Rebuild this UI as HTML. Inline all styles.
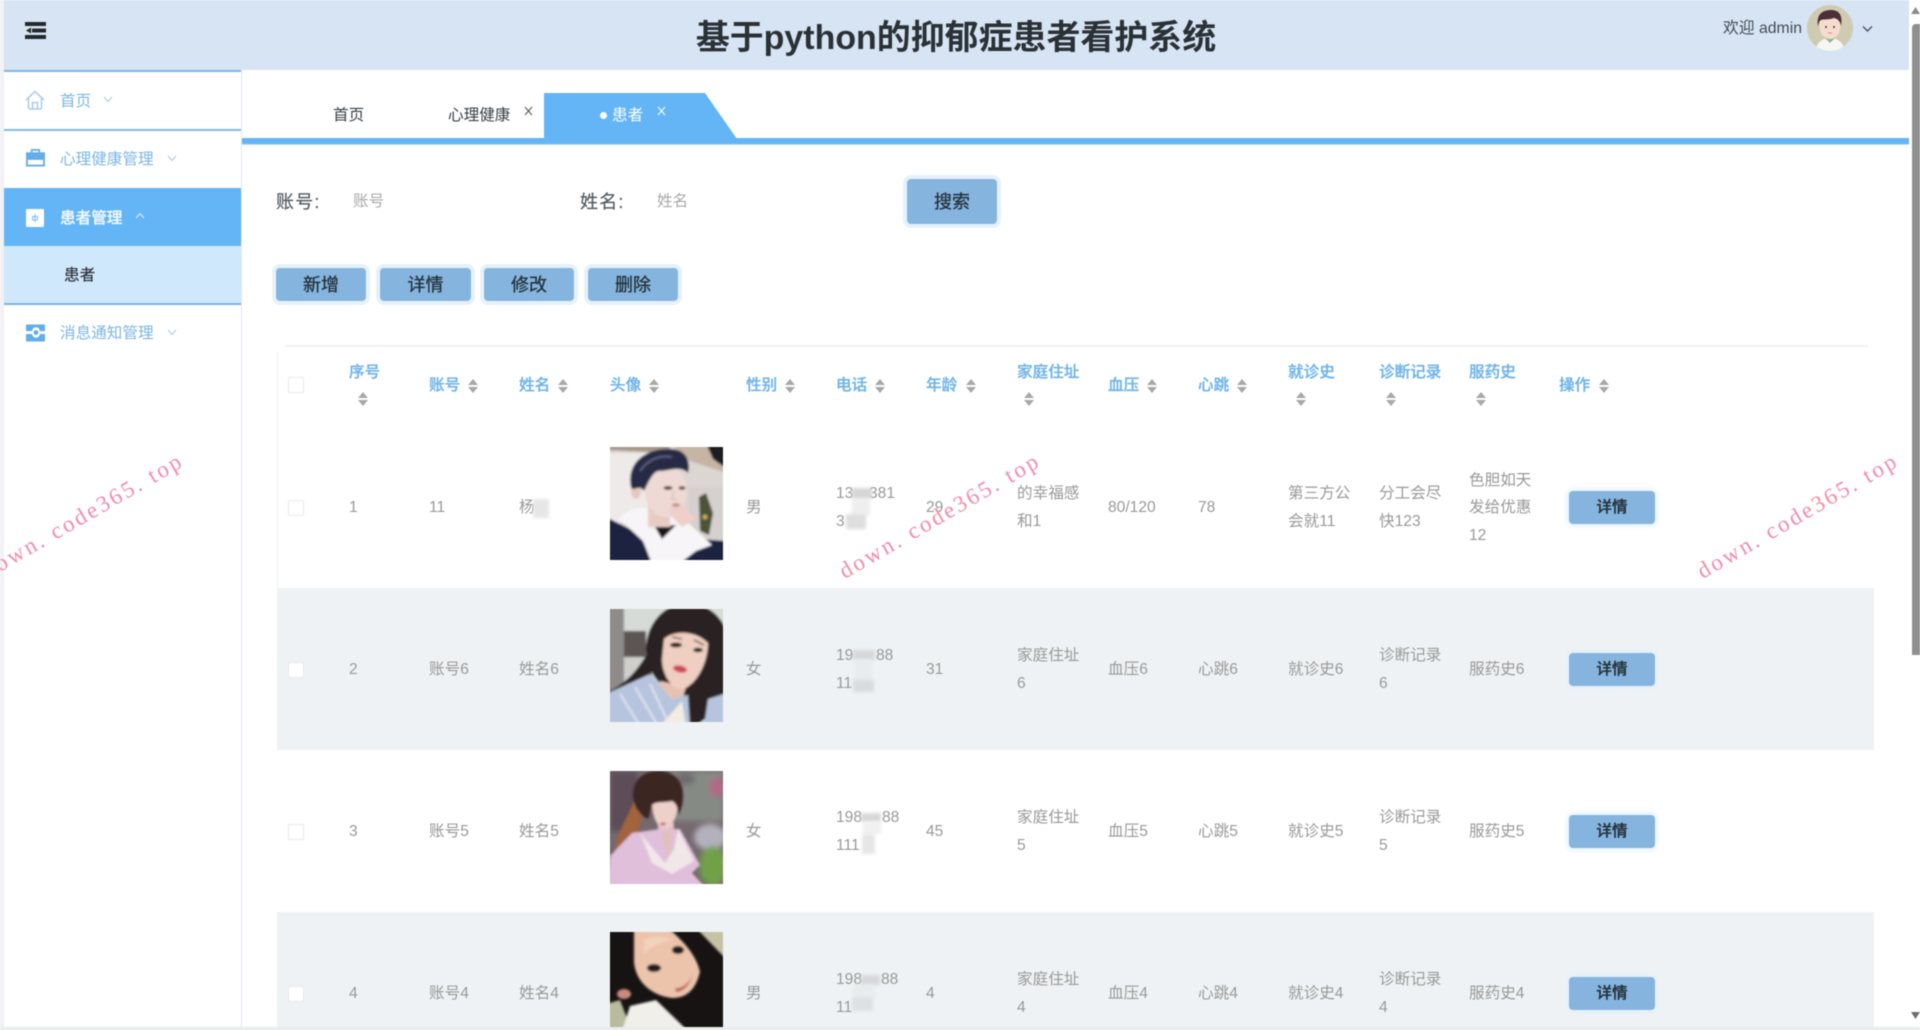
<!DOCTYPE html>
<html lang="zh-CN">
<head>
<meta charset="utf-8">
<title>基于python的抑郁症患者看护系统</title>
<style>
html,body{margin:0;padding:0;width:1920px;height:1030px;overflow:hidden;background:#fff;}
#root{position:relative;width:1920px;height:1030px;overflow:hidden;background:#fff;filter:blur(.45px);font-family:"Liberation Sans","Noto Sans CJK SC",sans-serif;}
.a{position:absolute;}
.t{position:absolute;line-height:20px;height:20px;margin-top:1px;white-space:nowrap;font-size:15.6px;color:#999;}
.h{color:#6fb4ea;font-weight:500;-webkit-text-stroke:.3px #6fb4ea;}
.m{color:#7db6e4;margin-left:-1px;}
.cr{position:absolute;width:10px;height:14px;}
.cr:before,.cr:after{content:"";position:absolute;left:0;border-left:5px solid transparent;border-right:5px solid transparent;}
.cr:before{top:0;border-bottom:6px solid #a8a8a8;}
.cr:after{bottom:0;border-top:6px solid #a8a8a8;}
.cb{position:absolute;left:288px;width:14px;height:14px;background:#fff;border:1px solid #e8e8e8;border-radius:2px;}
.btn{position:absolute;background:#85b5de;border-radius:4px;box-shadow:0 0 0 4px #e6f2fb;color:#25323c;text-align:center;font-size:18px;-webkit-text-stroke:.3px #25323c;}
.btn span{position:relative;top:1px;}
.dbtn{position:absolute;left:1569px;width:86px;height:33px;line-height:34px;background:#85b5de;border-radius:4px;box-shadow:0 0 6px 2px #e2f0fb;color:#25323c;text-align:center;font-size:15.6px;font-weight:500;-webkit-text-stroke:.3px #25323c;}
.lbl{color:#555c63;font-size:18px;letter-spacing:1.2px;-webkit-text-stroke:.2px #555c63;}
.wm{position:absolute;font-family:"Liberation Serif",serif;font-size:23px;letter-spacing:2.6px;color:#f28cab;white-space:nowrap;transform:translate(-50%,-50%) rotate(-30deg);line-height:26px;}
.ph{position:absolute;left:610px;width:113px;}
.bl{position:absolute;filter:blur(1.5px);}
</style>
</head>
<body>
<div id="root">
<svg width="0" height="0" style="position:absolute"><defs><filter id="b1" x="-10%" y="-10%" width="120%" height="120%"><feGaussianBlur stdDeviation="1.1"/></filter><filter id="b3" x="-10%" y="-10%" width="120%" height="120%"><feGaussianBlur stdDeviation="2.6"/></filter></defs></svg>

<!-- left strip -->
<div class="a" style="left:0;top:0;width:4px;height:1030px;background:#f1f2f5"></div>

<!-- header -->
<div class="a" style="left:4px;top:0;width:1905px;height:70px;background:#d7e4f4"></div>
<svg class="a" style="left:25px;top:22px" width="21" height="17" viewBox="0 0 21 17"><rect width="21" height="4" fill="#23282e"/><rect x="7" y="6.5" width="14" height="4" fill="#23282e"/><path d="M1 8.5 6 5.5V11.5Z" fill="#23282e"/><rect y="13" width="21" height="4" fill="#23282e"/></svg>
<div class="a" style="left:556px;width:800px;top:15px;text-align:center;font-size:33.95px;line-height:46px;font-weight:700;color:#2a3136;white-space:nowrap">基于python的抑郁症患者看护系统</div>
<div class="t" style="left:1723px;top:18px;color:#444c55;font-size:15.8px">欢迎 admin</div>
<svg class="a" style="left:1807px;top:5px" width="46" height="46" viewBox="0 0 46 46"><defs><clipPath id="av"><circle cx="23" cy="23" r="23"/></clipPath></defs><g clip-path="url(#av)"><rect width="46" height="46" fill="#cfcbb0"/><path d="M8 46C10 36 17 33 23 33S36 36 38 46Z" fill="#f6f6f2"/><path d="M18 33 23 38 28 33 26 30H20Z" fill="#8fb49a"/><ellipse cx="23" cy="21" rx="10.5" ry="13" fill="#f5dccd"/><path d="M11 21C9 9 16 5 24 5S36 10 34 21C33 16 31 14 27 13 22 15 16 14 14 15 12 16 12 18 11 21Z" fill="#4b3039"/><circle cx="19" cy="22" r="1" fill="#4b3039"/><circle cx="27" cy="22" r="1" fill="#4b3039"/><path d="M21 28H25" stroke="#d88" stroke-width="1"/></g></svg>
<svg class="a" style="left:1862px;top:25px" width="11" height="8" viewBox="0 0 11 8"><path d="M1 1.5 5.5 6 10 1.5" fill="none" stroke="#4a525a" stroke-width="1.4"/></svg>

<!-- scrollbar -->
<div class="a" style="left:1912px;top:24px;width:8px;height:631px;background:#8f8f8f;border-radius:4px 0 0 0"></div>
<svg class="a" style="left:1911px;top:7px" width="9" height="7"><path d="M0 7 4.5 0 9 7Z" fill="#8a8a8a"/></svg>
<svg class="a" style="left:1911px;top:1012px" width="9" height="7"><path d="M0 0 4.5 7 9 0Z" fill="#6e6e6e"/></svg>

<!-- sidebar -->
<div class="a" style="left:4px;top:70px;width:237px;height:960px;background:#fff;border-right:1px solid #e2e6ee"></div>
<div class="a" style="left:4px;top:70px;width:237px;height:2px;background:#7cb4e2"></div>
<div class="a" style="left:4px;top:129px;width:237px;height:2px;background:#86b8e0"></div>
<div class="a" style="left:4px;top:188px;width:237px;height:58px;background:#64b5f6"></div>
<div class="a" style="left:4px;top:246px;width:237px;height:57px;background:#cfe8fc"></div>
<div class="a" style="left:4px;top:303px;width:237px;height:2px;background:#7cb4e2"></div>

<svg class="a" style="left:25px;top:90px" width="20" height="20" viewBox="0 0 20 20"><path d="M1 10 10 1.5 19 10M3.5 8.5V17.5A1.5 1.5 0 0 0 5 19H15A1.5 1.5 0 0 0 16.5 17.5V8.5M7.5 19V12.5H12.5V19" fill="none" stroke="#9cc6e8" stroke-width="1.3"/></svg>
<div class="t m" style="left:61px;top:91px">首页</div>
<svg class="a" style="left:103px;top:96px" width="10" height="7"><path d="M1 1 5 5.5 9 1" fill="none" stroke="#a9cde9" stroke-width="1.1"/></svg>

<svg class="a" style="left:26px;top:148px" width="19" height="19" viewBox="0 0 20 19"><path d="M6 5V1.5H14V5" fill="none" stroke="#62aeea" stroke-width="1.8"/><rect y="4" width="20" height="8.5" fill="#62aeea"/><rect y="12.5" width="20" height="6.5" fill="#62aeea"/><rect x="2" y="12" width="16" height="5" fill="#fff"/></svg>
<div class="t m" style="left:61px;top:149px">心理健康管理</div>
<svg class="a" style="left:167px;top:155px" width="10" height="7"><path d="M1 1 5 5.5 9 1" fill="none" stroke="#a9cde9" stroke-width="1.1"/></svg>

<svg class="a" style="left:26px;top:209px" width="18" height="18" viewBox="0 0 18 18"><rect width="18" height="18" rx="1" fill="#fff"/><path d="M9 5V13" stroke="#7cc0f6" stroke-width="1"/><path d="M6.5 7.5H11.5V11H6.5Z" fill="none" stroke="#7cc0f6" stroke-width="1"/></svg>
<div class="t" style="left:60px;top:208px;color:#f2f9ff;font-weight:500;-webkit-text-stroke:.25px #f2f9ff">患者管理</div>
<svg class="a" style="left:135px;top:212px" width="10" height="7"><path d="M1 6 5 1.5 9 6" fill="none" stroke="#d6ecfd" stroke-width="1.1"/></svg>
<div class="t" style="left:64px;top:265px;color:#2d3339;-webkit-text-stroke:.2px #2d3339">患者</div>

<svg class="a" style="left:26px;top:324px" width="19" height="18" viewBox="0 0 20 18"><path d="M0 0H20V7H14.5A4 4 0 0 0 6.5 7H0Z" fill="#62aeea"/><path d="M0 10H6.5A4 4 0 0 0 14.5 10H20V18H0Z" fill="#62aeea"/><circle cx="10.5" cy="8.5" r="2.5" fill="#62aeea"/></svg>
<div class="t m" style="left:61px;top:323px">消息通知管理</div>
<svg class="a" style="left:167px;top:329px" width="10" height="7"><path d="M1 1 5 5.5 9 1" fill="none" stroke="#a9cde9" stroke-width="1.1"/></svg>

<!-- tabs -->
<svg class="a" style="left:544px;top:93px" width="193" height="46" viewBox="0 0 193 46"><path d="M0 0H161L193 46H0Z" fill="#64b5f6"/></svg>
<div class="a" style="left:242px;top:138px;width:1667px;height:6px;background:#64b5f6;box-shadow:0 1px 0 #b9e0fb"></div>
<div class="t" style="left:333px;top:105px;color:#3a3f45">首页</div>
<div class="t" style="left:448px;top:105px;color:#3a3f45">心理健康</div>
<svg class="a" style="left:524px;top:106px" width="9" height="10"><path d="M1 1 8 9M8 1 1 9" stroke="#555" stroke-width="1"/></svg>
<div class="a" style="left:600px;top:112px;width:7px;height:7px;border-radius:50%;background:#fff"></div>
<div class="t" style="left:612px;top:105px;color:#fff">患者</div>
<svg class="a" style="left:657px;top:106px" width="9" height="10"><path d="M1 1 8 9M8 1 1 9" stroke="#fff" stroke-width="1"/></svg>

<!-- search -->
<div class="t lbl" style="left:276px;top:191px">账号:</div>
<div class="t" style="left:353px;top:191px;color:#aaa">账号</div>
<div class="t lbl" style="left:580px;top:191px">姓名:</div>
<div class="t" style="left:657px;top:191px;color:#aaa">姓名</div>
<div class="btn" style="left:907px;top:179px;width:90px;height:45px;line-height:45px"><span>搜索</span></div>

<div class="btn" style="left:276px;top:268px;width:90px;height:33px;line-height:33px"><span>新增</span></div>
<div class="btn" style="left:380px;top:268px;width:91px;height:33px;line-height:33px"><span>详情</span></div>
<div class="btn" style="left:484px;top:268px;width:90px;height:33px;line-height:33px"><span>修改</span></div>
<div class="btn" style="left:588px;top:268px;width:90px;height:33px;line-height:33px"><span>删除</span></div>

<!-- table -->
<div class="a" style="left:285px;top:345px;width:1583px;height:2px;background:#f1f2f2"></div>
<div class="a" style="left:277px;top:352px;width:1px;height:236px;background:#f2f3f4"></div>
<div class="a" style="left:277px;top:588px;width:1597px;height:162px;background:#eff2f4"></div>
<div class="a" style="left:277px;top:912px;width:1597px;height:118px;background:#eff2f4"></div>

<div class="cb" style="top:377px"></div>
<div class="t h" style="left:349px;top:362px">序号</div><div class="cr" style="left:358px;top:392px"></div>
<div class="t h" style="left:429px;top:375px">账号</div><div class="cr" style="left:468px;top:379px"></div>
<div class="t h" style="left:519px;top:375px">姓名</div><div class="cr" style="left:558px;top:379px"></div>
<div class="t h" style="left:610px;top:375px">头像</div><div class="cr" style="left:649px;top:379px"></div>
<div class="t h" style="left:746px;top:375px">性别</div><div class="cr" style="left:785px;top:379px"></div>
<div class="t h" style="left:836px;top:375px">电话</div><div class="cr" style="left:875px;top:379px"></div>
<div class="t h" style="left:926px;top:375px">年龄</div><div class="cr" style="left:966px;top:379px"></div>
<div class="t h" style="left:1017px;top:362px">家庭住址</div><div class="cr" style="left:1024px;top:392px"></div>
<div class="t h" style="left:1108px;top:375px">血压</div><div class="cr" style="left:1147px;top:379px"></div>
<div class="t h" style="left:1198px;top:375px">心跳</div><div class="cr" style="left:1237px;top:379px"></div>
<div class="t h" style="left:1288px;top:362px">就诊史</div><div class="cr" style="left:1296px;top:392px"></div>
<div class="t h" style="left:1379px;top:362px">诊断记录</div><div class="cr" style="left:1386px;top:392px"></div>
<div class="t h" style="left:1469px;top:362px">服药史</div><div class="cr" style="left:1476px;top:392px"></div>
<div class="t h" style="left:1559px;top:375px">操作</div><div class="cr" style="left:1599px;top:379px"></div>

<!-- row 1 -->
<div class="cb" style="top:500px"></div>
<div class="t" style="left:349px;top:497px">1</div>
<div class="t" style="left:429px;top:497px">11</div>
<div class="t" style="left:519px;top:497px">杨</div>
<div class="bl" style="left:533px;top:499px;width:16px;height:19px;background:#e6e6e6"></div>
<svg class="ph" style="top:447px" width="113" height="113" viewBox="0 0 113 113"><g filter="url(#b1)"><rect x="-4" y="-4" width="121" height="121" fill="#dcd6d3"/><rect x="-4" y="6" width="46" height="70" fill="#efeaea"/><path d="M-4 -4H60V6L-4 3Z" fill="#a89888"/><path d="M60 -4H117V26L80 14Z" fill="#c6b4a4"/><path d="M96 -4H117V22L103 12Z" fill="#1c1c20"/><rect x="78" y="40" width="39" height="60" fill="#d6d0ce"/><path d="M89 50 96 46 103 66 99 88 90 84Z" fill="#4b5238"/><circle cx="95" cy="70" r="2.5" fill="#c9ad58"/><path d="M-4 70 28 86 46 117H-4Z" fill="#1a2340"/><path d="M66 100 88 92 117 94V117H66Z" fill="#1a2340"/><path d="M9 72C18 60 35 60 43 62L72 70 102 98 86 104 69 117H42L33 94Z" fill="#f7f5f7"/><path d="M45 80 66 78 52 92Z" fill="#191517"/><rect x="38" y="52" width="22" height="28" fill="#e8ccc4"/><ellipse cx="26" cy="44" rx="5" ry="8" fill="#e6c8c0"/><ellipse cx="56" cy="44" rx="21" ry="26" fill="#efd9d4"/><path d="M21 40C16 14 38 1 60 2 76 2 81 14 78 26 70 18 60 24 48 24 42 26 38 36 34 44 28 36 24 46 21 40Z" fill="#262a45"/><path d="M30 24C38 12 50 8 62 10" stroke="#5a6080" stroke-width="2" fill="none"/><ellipse cx="58" cy="41" rx="4.5" ry="1.8" fill="#3a2a2c"/><ellipse cx="72" cy="41" rx="3.5" ry="1.6" fill="#3a2a2c"/><path d="M64 44 62 52 67 53" stroke="#d8b0a8" fill="none"/><path d="M60 60 73 58 86 72 72 80 60 68Z" fill="#efcfca"/><ellipse cx="66" cy="58" rx="4" ry="1.8" fill="#c48c84"/></g></svg>
<div class="t" style="left:746px;top:497px">男</div>
<div class="t" style="left:836px;top:483px">13</div><div class="t" style="left:869px;top:483px">381</div>
<div class="t" style="left:836px;top:511px">3</div>
<div class="bl" style="left:852px;top:488px;width:20px;height:11px;background:#d6d6d6"></div>
<div class="bl" style="left:852px;top:499px;width:18px;height:16px;background:#eeeeee"></div>
<div class="bl" style="left:846px;top:514px;width:20px;height:15px;background:#dedede"></div>
<div class="t" style="left:926px;top:497px">29</div>
<div class="t" style="left:1017px;top:483px">的幸福感</div><div class="t" style="left:1017px;top:511px">和1</div>
<div class="t" style="left:1108px;top:497px">80/120</div>
<div class="t" style="left:1198px;top:497px">78</div>
<div class="t" style="left:1288px;top:483px">第三方公</div><div class="t" style="left:1288px;top:511px">会就11</div>
<div class="t" style="left:1379px;top:483px">分工会尽</div><div class="t" style="left:1379px;top:511px">快123</div>
<div class="t" style="left:1469px;top:470px">色胆如天</div><div class="t" style="left:1469px;top:497px">发给优惠</div><div class="t" style="left:1469px;top:525px">12</div>
<div class="dbtn" style="top:491px">详情</div>

<!-- row 2 -->
<div class="cb" style="top:662px"></div>
<div class="t" style="left:349px;top:659px">2</div>
<div class="t" style="left:429px;top:659px">账号6</div>
<div class="t" style="left:519px;top:659px">姓名6</div>
<svg class="ph" style="top:609px" width="113" height="113" viewBox="0 0 113 113"><g filter="url(#b1)"><rect x="-4" y="-4" width="121" height="121" fill="#d6dbd8"/><rect x="-4" y="-4" width="18" height="121" fill="#8f8b89"/><rect x="14" y="22" width="22" height="26" fill="#5c5552"/><rect x="14" y="48" width="24" height="30" fill="#cfcfcb"/><ellipse cx="78" cy="40" rx="42" ry="46" fill="#2b2020"/><path d="M40 40C28 60 20 72 -4 84V94L42 72Z" fill="#2b2020"/><path d="M78 66 117 58V92L86 117H68Z" fill="#2b2020"/><path d="M50 72 76 78 70 98 50 106Z" fill="#e6c2b2"/><path d="M54 30C62 22 84 20 98 34 98 50 90 72 74 80 62 82 52 66 52 50Z" fill="#efcfc1"/><ellipse cx="66" cy="36" rx="6" ry="2.4" fill="#2a1c1c"/><ellipse cx="88" cy="41" rx="5" ry="2.2" fill="#2a1c1c"/><path d="M62 28 72 30M84 31 94 36" stroke="#3a2824" stroke-width="1.4"/><ellipse cx="70" cy="60" rx="7" ry="3.4" fill="#d24658" transform="rotate(12 70 60)"/><path d="M-4 85 40 65 62 90 78 86 80 117H-4Z" fill="#b6c4de"/><path d="M10 85 30 117M25 78 48 117M40 75 60 117" stroke="#e0e6f0" stroke-width="2"/><path d="M50 117 72 92 76 117Z" fill="#f3ece2"/><path d="M98 90 117 84V117H94Z" fill="#b6c4de"/></g></svg>
<div class="t" style="left:746px;top:659px">女</div>
<div class="t" style="left:836px;top:645px">19</div><div class="t" style="left:876px;top:645px">88</div>
<div class="t" style="left:836px;top:673px">11</div>
<div class="bl" style="left:853px;top:650px;width:22px;height:10px;background:#d6d8da"></div>
<div class="bl" style="left:854px;top:660px;width:18px;height:22px;background:#e8ecee"></div>
<div class="bl" style="left:853px;top:680px;width:21px;height:12px;background:#d8dcde"></div>
<div class="t" style="left:926px;top:659px">31</div>
<div class="t" style="left:1017px;top:645px">家庭住址</div><div class="t" style="left:1017px;top:673px">6</div>
<div class="t" style="left:1108px;top:659px">血压6</div>
<div class="t" style="left:1198px;top:659px">心跳6</div>
<div class="t" style="left:1288px;top:659px">就诊史6</div>
<div class="t" style="left:1379px;top:645px">诊断记录</div><div class="t" style="left:1379px;top:673px">6</div>
<div class="t" style="left:1469px;top:659px">服药史6</div>
<div class="dbtn" style="top:653px">详情</div>

<!-- row 3 -->
<div class="cb" style="top:824px"></div>
<div class="t" style="left:349px;top:821px">3</div>
<div class="t" style="left:429px;top:821px">账号5</div>
<div class="t" style="left:519px;top:821px">姓名5</div>
<svg class="ph" style="top:771px" width="113" height="113" viewBox="0 0 113 113"><rect width="113" height="113" fill="#75696e"/><g filter="url(#b3)"><rect x="60" y="0" width="53" height="50" fill="#868a84"/><ellipse cx="107" cy="16" rx="8" ry="10" fill="#b06a86"/><ellipse cx="75" cy="8" rx="10" ry="6" fill="#6d6a70"/><ellipse cx="100" cy="66" rx="16" ry="13" fill="#b3b1be"/><ellipse cx="103" cy="95" rx="14" ry="20" fill="#72a048"/><rect x="0" y="0" width="28" height="60" fill="#5d4d59"/></g><g filter="url(#b1)"><path d="M26 24C20 44 8 56 4 84L24 72 32 50Z" fill="#a2643c"/><path d="M48 52H64V66H48Z" fill="#e4c2ba"/><path d="M42 30H68C68 42 64 57 54 57 46 56 42 44 42 30Z" fill="#edd0ca"/><path d="M23 26C22 8 34 0 48 0 62 0 74 8 73 26 73 34 70 42 68 44 68 36 66 32 62 30 54 32 46 30 42 34 40 40 40 44 38 48 30 44 24 36 23 26Z" fill="#3a2722"/><ellipse cx="53" cy="53" rx="3" ry="1.4" fill="#b85e64"/><path d="M-2 117 0 85 22 62 50 58 70 58 90 94 82 102 96 117Z" fill="#e0bfda"/><path d="M30 62 55 92 64 78 68 58 84 90 62 103 42 92Z" fill="#f1e7e9"/><path d="M52 62 62 60 58 88Z" fill="#e2bfb6"/></g></svg>
<div class="t" style="left:746px;top:821px">女</div>
<div class="t" style="left:836px;top:807px">198</div><div class="t" style="left:882px;top:807px">88</div>
<div class="t" style="left:836px;top:835px">111</div>
<div class="bl" style="left:861px;top:813px;width:20px;height:9px;background:#d8d8d8"></div>
<div class="bl" style="left:863px;top:822px;width:18px;height:12px;background:#f0f0f0"></div>
<div class="bl" style="left:862px;top:834px;width:13px;height:20px;background:#e6e6e6"></div>
<div class="t" style="left:926px;top:821px">45</div>
<div class="t" style="left:1017px;top:807px">家庭住址</div><div class="t" style="left:1017px;top:835px">5</div>
<div class="t" style="left:1108px;top:821px">血压5</div>
<div class="t" style="left:1198px;top:821px">心跳5</div>
<div class="t" style="left:1288px;top:821px">就诊史5</div>
<div class="t" style="left:1379px;top:807px">诊断记录</div><div class="t" style="left:1379px;top:835px">5</div>
<div class="t" style="left:1469px;top:821px">服药史5</div>
<div class="dbtn" style="top:815px">详情</div>

<!-- row 4 -->
<div class="cb" style="top:986px"></div>
<div class="t" style="left:349px;top:983px">4</div>
<div class="t" style="left:429px;top:983px">账号4</div>
<div class="t" style="left:519px;top:983px">姓名4</div>
<svg class="ph" style="top:932px" width="113" height="95" viewBox="0 0 113 95"><rect width="113" height="95" fill="#181313"/><g filter="url(#b1)"><path d="M86 -4H117V28Z" fill="#c6c3a5"/><path d="M-4 72 10 68 22 99H-4Z" fill="#b8bb9c"/><ellipse cx="14" cy="62" rx="7" ry="5" fill="#c88a7c"/><path d="M24 -4H58C72 8 86 22 90 40 86 56 78 66 62 66 44 64 26 52 24 30Z" fill="#ecc4ab"/><path d="M34 8C44 4 54 4 62 8 50 10 42 14 34 22Z" fill="#f2d2bc"/><ellipse cx="44" cy="36" rx="7" ry="4" fill="#241a18"/><ellipse cx="68" cy="18" rx="6" ry="4" fill="#241a18"/><path d="M65 56C72 57 80 50 83 42 80 52 74 60 66 60Z" fill="#c46a60"/><path d="M12 99 20 74 46 68 78 99Z" fill="#f1efea"/></g></svg>
<div class="t" style="left:746px;top:983px">男</div>
<div class="t" style="left:836px;top:969px">198</div><div class="t" style="left:881px;top:969px">88</div>
<div class="t" style="left:836px;top:997px">11</div>
<div class="bl" style="left:861px;top:975px;width:19px;height:10px;background:#d6d8da"></div>
<div class="bl" style="left:853px;top:985px;width:22px;height:12px;background:#e8ecee"></div>
<div class="bl" style="left:852px;top:997px;width:21px;height:14px;background:#dde1e3"></div>
<div class="t" style="left:926px;top:983px">4</div>
<div class="t" style="left:1017px;top:969px">家庭住址</div><div class="t" style="left:1017px;top:997px">4</div>
<div class="t" style="left:1108px;top:983px">血压4</div>
<div class="t" style="left:1198px;top:983px">心跳4</div>
<div class="t" style="left:1288px;top:983px">就诊史4</div>
<div class="t" style="left:1379px;top:969px">诊断记录</div><div class="t" style="left:1379px;top:997px">4</div>
<div class="t" style="left:1469px;top:983px">服药史4</div>
<div class="dbtn" style="top:977px">详情</div>

<!-- bottom strip -->
<div class="a" style="left:0;top:1027px;width:1920px;height:3px;background:#e9ecec"></div>

<!-- watermarks -->
<div class="wm" style="left:83px;top:516px">down. code365. top</div>
<div class="wm" style="left:940px;top:516px">down. code365. top</div>
<div class="wm" style="left:1798px;top:516px">down. code365. top</div>
</div>
</body>
</html>
